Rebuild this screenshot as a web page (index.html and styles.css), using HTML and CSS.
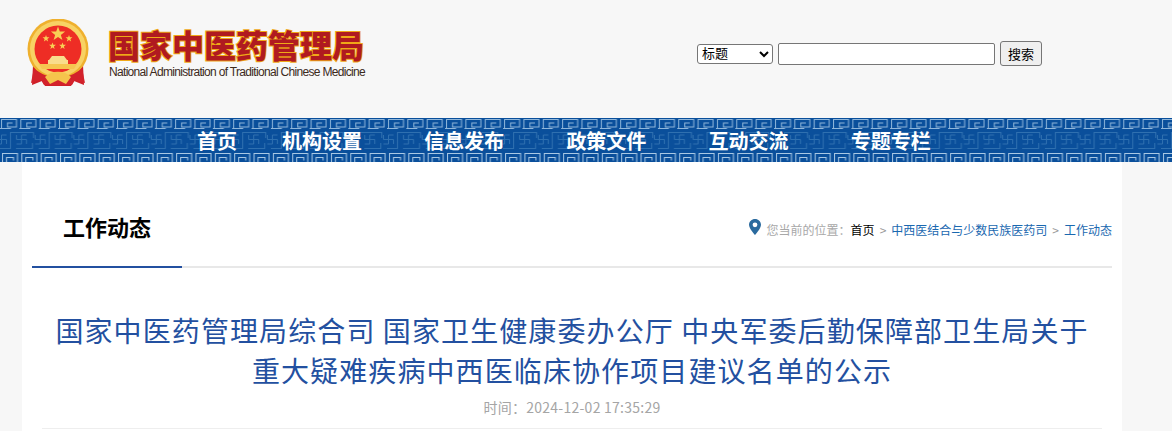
FILE: index.html
```html
<!DOCTYPE html>
<html lang="zh-CN">
<head>
    <meta charset="UTF-8">
    <title>国家中医药管理局</title>
    <link rel="stylesheet" href="styles.css">
</head>
<body>
<header class="top">
    <div class="logo">
        <svg class="emblem" width="66" height="70" viewBox="0 0 66 70">
            <defs>
                <path id="star" d="M0 -1 L0.24 -0.32 H0.95 L0.38 0.12 L0.59 0.81 L0 0.4 L-0.59 0.81 L-0.38 0.12 L-0.95 -0.32 H-0.24 Z" fill="#f8cf55"/>
            </defs>
            <path d="M8 46 L7 66 L17 62 L20 67 H46 L49 62 L59 66 L58 46 Z" fill="#cf1f28"/>
            <circle cx="33" cy="30" r="30.5" fill="#efb02e"/>
            <circle cx="33" cy="30" r="28" fill="#f8d264"/>
            <circle cx="33" cy="30" r="23.5" fill="#ee2d25"/>
            <use href="#star" transform="translate(33 15) scale(7.5)"/>
            <use href="#star" transform="translate(21 19.5) scale(3.6)"/>
            <use href="#star" transform="translate(44 19.5) scale(3.6)"/>
            <use href="#star" transform="translate(27.5 27) scale(3.6)"/>
            <use href="#star" transform="translate(37.5 27) scale(3.6)"/>
            <path d="M24 41 L27 37 H39 L42 41 H43 V45 H23 V41 Z" fill="#f9dd8c"/>
            <path d="M14 45 H52 L49 50 H17 Z" fill="#f6c650"/>
            <path d="M9 49 C16 56 25 58 33 58 C41 58 50 56 57 49 L60 64 L50 61 L47 66 H19 L16 61 L6 64 Z" fill="#d3222b"/>
            <path d="M20 58 C26 51 40 51 46 58 L41 65 L33 61 L25 65 Z" fill="#f5c44c"/>
        </svg>
        <div class="logo-text">
            <div class="logo-cn">国家中医药管理局</div>
            <div class="logo-en">National Administration of Traditional Chinese Medicine</div>
        </div>
    </div>
    <form class="search">
        <select class="search-type"><option>标题</option></select>
        <input class="search-input" type="text">
        <button class="search-btn" type="button">搜索</button>
    </form>
</header>

<nav class="nav">
    <svg class="nav-bg" width="100%" height="44">
        <defs>
            <pattern id="fret-top" width="19.35" height="12" patternUnits="userSpaceOnUse">
                <path d="M1.5 11 V1.5 H16.5 V9 H7.5 V5 H12.5" fill="none" stroke="#8fb6da" stroke-width="1"/>
                <path d="M0 10.5 H11" fill="none" stroke="#8fb6da" stroke-width="1"/>
            </pattern>
            <pattern id="fret-bottom" width="19.35" height="9" x="1" y="35" patternUnits="userSpaceOnUse">
                <path d="M1.5 9 V0.5 H16.5 V9 M5.5 9 V4.5 H12.5 V7.5" fill="none" stroke="#a9c8e4" stroke-width="1"/>
            </pattern>
            <pattern id="fret-mid" width="38.7" height="19" y="13" patternUnits="userSpaceOnUse">
                <g fill="none" stroke="#2f70b0" stroke-width="1">
                    <path d="M0 17.5 H10.5 V1.5 H33.5 V7"/>
                    <path d="M16 17.5 H32.5 V12"/>
                    <path d="M21.5 4 V13 M16.5 8.5 H26.5 M21.5 4 H26.5 M21.5 13 H16.5 M16.5 8.5 V4 M26.5 8.5 V13"/>
                    <path d="M1.5 4 V13 M-3.5 8.5 H6.5 M1.5 4 H6.5 M1.5 13 H-3.5 M6.5 8.5 V13"/>
                    <path d="M40.2 4 V13 M35.2 8.5 H45.2 M35.2 8.5 V4 M40.2 13 H35.2"/>
                </g>
            </pattern>
        </defs>
        <rect width="100%" height="44" fill="#0a4f9b"/>
        <rect width="100%" height="12" fill="url(#fret-top)"/>
        <rect width="100%" height="19" y="13" fill="url(#fret-mid)"/>
        <rect width="100%" height="9" y="35" fill="url(#fret-bottom)"/>
    </svg>
    <a class="nav-link nav-home" href="#">首页</a>
    <a class="nav-link" href="#">机构设置</a>
    <a class="nav-link" href="#">信息发布</a>
    <a class="nav-link" href="#">政策文件</a>
    <a class="nav-link" href="#">互动交流</a>
    <a class="nav-link" href="#">专题专栏</a>
</nav>

<main class="card">
    <div class="section-head">
        <h2 class="section-title">工作动态</h2>
        <div class="crumbs">
            <svg class="pin" width="12" height="16" viewBox="0 0 12 16">
                <path fill-rule="evenodd" d="M6 0 C2.7 0 0 2.6 0 5.8 C0 9.6 6 16 6 16 C6 16 12 9.6 12 5.8 C12 2.6 9.3 0 6 0 Z M6 3.4 A2.4 2.4 0 1 1 6 8.2 A2.4 2.4 0 0 1 6 3.4 Z" fill="#2a6a9e"/>
            </svg>
            <span class="crumb-label">您当前的位置：</span>
            <a class="crumb-home" href="#">首页</a>
            <span class="crumb-sep">&gt;</span>
            <a href="#">中西医结合与少数民族医药司</a>
            <span class="crumb-sep">&gt;</span>
            <a href="#">工作动态</a>
        </div>
    </div>
    <article class="article">
        <h1 class="article-title">国家中医药管理局综合司 国家卫生健康委办公厅 中央军委后勤保障部卫生局关于<br>重大疑难疾病中西医临床协作项目建议名单的公示</h1>
        <div class="article-time">时间：2024-12-02 17:35:29</div>
    </article>
</main>
</body>
</html>
```

FILE: styles.css
```css
body {
    margin: 0;
    height: 431px;
    overflow: hidden;
    background: #f7f7f7;
    font-family: "Noto Sans CJK SC", "Liberation Sans", sans-serif;
    color: #000;
}
a {
    text-decoration: none;
    color: inherit;
}
.top {
    height: 118px;
    display: flex;
    align-items: flex-start;
}
.logo {
    display: flex;
    padding: 19px 0 0 25px;
    width: 672px;
    box-sizing: border-box;
}
.emblem {
    display: block;
    flex: none;
}
.logo-text {
    margin-left: 17px;
    padding-top: 5px;
}
.logo-cn {
    font-size: 32px;
    line-height: 40px;
    font-weight: 900;
    color: #b01a20;
    -webkit-text-stroke: 2px #f0a818;
    paint-order: stroke fill;
    white-space: nowrap;
}
.logo-en {
    font-family: "Liberation Sans", sans-serif;
    font-size: 12px;
    line-height: 16px;
    margin-left: 1px;
    color: #3c2a1c;
    letter-spacing: -0.68px;
    white-space: nowrap;
}
.search {
    display: flex;
    align-items: center;
    gap: 5px;
    margin: 41px 0 0 25px;
    height: 25px;
}
.search-type {
    width: 76px;
    height: 20px;
    font-size: 13px;
    font-family: "Liberation Sans", "Noto Sans CJK SC", sans-serif;
    padding: 0;
    background: #fff;
    border: 1px solid #767676;
    border-radius: 3px;
}
.search-input {
    width: 217px;
    height: 22px;
    box-sizing: border-box;
    border: 1px solid #767676;
    border-radius: 2px;
    background: #fff;
    padding: 0 2px;
}
.search-btn {
    width: 42px;
    height: 25px;
    padding: 0;
    font-size: 13px;
    font-family: "Liberation Sans", "Noto Sans CJK SC", sans-serif;
    color: #000;
    background: #efefef;
    border: 1px solid #767676;
    border-radius: 3px;
}
.nav {
    position: relative;
    height: 44px;
    display: flex;
    align-items: center;
    padding-left: 197px;
    background: #0a4f9b;
}
.nav-bg {
    position: absolute;
    left: 0;
    top: 0;
}
.nav-link {
    position: relative;
    top: 1px;
    width: 142.2px;
    flex: none;
    font-size: 20px;
    line-height: 44px;
    font-weight: 700;
    color: #fff;
    white-space: nowrap;
}
.nav-home {
    width: 85px;
}
.card {
    width: 1100px;
    margin-left: 22px;
    height: 269px;
    padding: 0 10px;
    box-sizing: border-box;
    background: #fff;
}
.section-head {
    height: 106px;
    box-sizing: border-box;
    display: flex;
    justify-content: space-between;
    align-items: flex-start;
    border-bottom: 2px solid #e8e8e8;
    position: relative;
}
.section-head::after {
    content: "";
    position: absolute;
    left: 0;
    bottom: -2px;
    width: 150px;
    height: 2px;
    background: #2350a0;
}
.section-title {
    margin: 45px 0 0 31px;
    font-size: 22px;
    line-height: 38px;
    font-weight: 700;
}
.crumbs {
    display: flex;
    align-items: center;
    margin-top: 58px;
    height: 18px;
    font-size: 12px;
    color: #1a68b0;
}
.pin {
    margin-right: 6px;
    position: relative;
    top: -2px;
}
.crumb-label {
    color: #a8a8a8;
}
.crumb-home {
    color: #000;
}
.crumb-sep {
    color: #999;
    margin: 0 5px;
}
.article {
    text-align: center;
}
.article-title {
    margin: 42px 0 0;
    font-size: 28px;
    line-height: 40px;
    font-weight: 400;
    letter-spacing: 1.1px;
    color: #2350a0;
}
.article-time {
    margin: 7px 10px 0;
    padding-bottom: 10px;
    height: 21px;
    font-size: 14px;
    line-height: 21px;
    letter-spacing: 0.25px;
    color: #a5a5a5;
    border-bottom: 1px solid #eee;
}
```
